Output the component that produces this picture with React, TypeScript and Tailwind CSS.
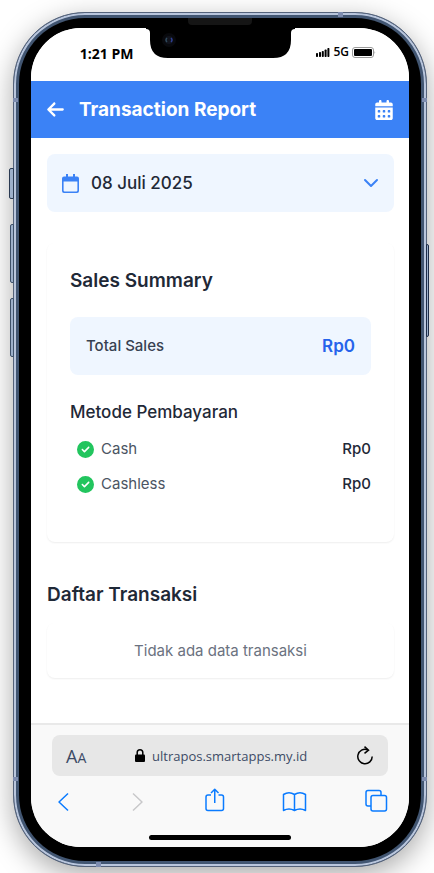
import type { ReactNode } from "react";
import { ChevronDown } from "lucide-react";
import { FaArrowLeft, FaCalendarDays, FaCircleCheck } from "react-icons/fa6";

const payments = [
  { name: "Cash", amount: "Rp0" },
  { name: "Cashless", amount: "Rp0" },
];

function Notch() {
  return (
    <svg className="h-[31px] w-[149px]" viewBox="0 0 149 31" aria-hidden="true">
      <path d="M0 0H149V1Q145 1 145 5V12Q145 30 127 30H22Q4 30 4 12V5Q4 1 0 1Z" fill="#000" />
      <circle cx="23" cy="12" r="7" fill="#08090d" />
      <circle cx="23" cy="12" r="4" fill="#12141d" />
      <path d="M21 10Q19 12 21 14" stroke="#2f4a5c" fill="none" strokeWidth="1.5" />
      <path d="M25 10Q27 12 25 14" stroke="#2e3f94" fill="none" strokeWidth="1.5" />
    </svg>
  );
}

function StatusBar() {
  return (
    <div className="grid h-[53px] grid-cols-[1fr_auto_1fr] bg-white font-['Open_Sans',sans-serif] text-black">
      <span className="justify-self-end pt-4 pr-3 text-sm leading-5 font-bold">1:21 PM</span>
      <Notch />
      <div className="mt-[14px] flex h-5 items-center gap-[3px] self-start justify-self-end pr-[33px]">
        <svg className="h-[9px] w-[14px]" viewBox="0 0 14 9" aria-label="Signal">
          <rect x="0" y="5" width="2" height="4" rx=".7" />
          <rect x="3" y="4" width="2" height="5" rx=".7" />
          <rect x="5.8" y="3" width="2" height="6" rx=".7" />
          <rect x="8.6" y="1.5" width="2" height="7.5" rx=".7" />
          <rect x="11.4" y="0" width="2" height="9" rx=".7" />
        </svg>
        <span className="text-xs leading-5 font-semibold">5G</span>
        <svg className="h-[11px] w-6" viewBox="0 0 24 11" aria-label="Battery">
          <rect x=".5" y=".5" width="21" height="10" rx="2.5" fill="none" stroke="#9a9a9a" />
          <rect x="2" y="2" width="18" height="7" rx="1" />
          <path d="M22.6 4Q23.8 5.5 22.6 7Z" fill="#777" />
        </svg>
      </div>
    </div>
  );
}

function Header() {
  return (
    <header className="flex h-[57px] items-center bg-[#3b82f6] px-[15px] text-white">
      <button type="button" aria-label="Back" className="mr-[14px]">
        <FaArrowLeft size={19} />
      </button>
      <h1 className="text-[19px] leading-7 font-bold">Transaction Report</h1>
      <button type="button" aria-label="Calendar" className="ml-auto">
        <FaCalendarDays size={20} />
      </button>
    </header>
  );
}

function CalendarIcon() {
  return (
    <svg className="mr-3 h-[19px] w-[17px] text-[#3b82f6]" viewBox="0 0 17 19" aria-hidden="true">
      <path d="M4 0H6V2.5H11V0H13V2.5H15Q17 2.5 17 4.5V17Q17 19 15 19H2Q0 19 0 17V4.5Q0 2.5 2 2.5H4ZM1.6 7.5V16.6Q1.6 17.4 2.4 17.4H14.6Q15.4 17.4 15.4 16.6V7.5Z" fill="currentColor" fillRule="evenodd" />
    </svg>
  );
}

function SalesSummary() {
  return (
    <section className="mt-[31px] rounded-lg bg-white p-[23px] shadow-[0_1px_2px_rgba(0,0,0,0.07)]">
      <h2 className="text-[19px] leading-[30px] font-semibold text-[#1f2937]">Sales Summary</h2>
      <div className="mt-[21px] flex h-[58px] items-center justify-between rounded-lg bg-[#eff6ff] px-4">
        <span className="text-[15px] leading-[26px] font-medium text-[#374151]">Total Sales</span>
        <span className="text-[17px] leading-[26px] font-semibold text-[#2563eb]">Rp0</span>
      </div>
      <h3 className="mt-[23px] text-[17px] leading-7 font-medium text-[#1f2937]">Metode Pembayaran</h3>
      <ul className="mt-[10px] mb-[22px] flex flex-col gap-[9px]">
        {payments.map((p) => (
          <li key={p.name} className="flex items-center pl-[7px] text-[15px] leading-[26px]">
            <FaCircleCheck size={17} className="mr-[7px] text-[#22c55e]" />
            <span className="text-[#4b5563]">{p.name}</span>
            <span className="ml-auto font-medium text-[#1f2937]">{p.amount}</span>
          </li>
        ))}
      </ul>
    </section>
  );
}

function ToolButton({ label, size, muted, children }: { label: string; size: string; muted?: boolean; children: ReactNode }) {
  return (
    <button type="button" aria-label={label} className={`flex justify-center ${size} ${muted ? "text-[#c8c8ca]" : "text-[#0a7bff]"}`}>
      <svg className="size-6 shrink-0 overflow-visible" viewBox="0 0 24 24" fill="none" stroke="currentColor" strokeWidth="1.5" strokeLinejoin="round">
        {children}
      </svg>
    </button>
  );
}

function BrowserBar() {
  return (
    <footer className="border-t-2 border-[#e9e9e9] bg-[#f9f9f9] px-[21px] pt-[10px] pb-[7px]">
      <div className="flex h-[41px] items-center rounded-lg bg-[#e7e7e7] px-[14px] font-['Open_Sans',sans-serif] text-[#3d4b66]">
        <button type="button" aria-label="Text size" className="text-lg leading-6">
          A<span className="text-sm">A</span>
        </button>
        <div className="flex flex-1 items-center justify-center gap-[7px]">
          <svg className="h-[13px] w-[10px]" viewBox="0 0 10 13" aria-hidden="true">
            <rect x="0" y="5.5" width="10" height="7.5" rx="1" fill="#000" />
            <path d="M2.2 6V3.6Q2.2.8 5 .8T7.8 3.6V6" fill="none" stroke="#000" strokeWidth="1.5" />
          </svg>
          <span className="text-[13px] leading-6">ultrapos.smartapps.my.id</span>
        </div>
        <button type="button" aria-label="Reload">
          <svg className="h-5 w-[18px]" viewBox="0 0 18 20" fill="none" stroke="#000" strokeWidth="1.5">
            <path d="M11.5 3.8A7.2 7.2 0 1 0 16.2 10.5" />
            <path d="M8.5 .6L12.5 4.2L8.5 7.4" />
          </svg>
        </button>
      </div>
      <nav className="mt-[13px] mb-[22px] flex h-6 items-center justify-between pl-[3px]">
        <ToolButton label="Back" size="w-4">
          <path d="M17 4.5L8 13L17 21.5" />
        </ToolButton>
        <ToolButton label="Forward" size="w-4" muted>
          <path d="M8 4.5L17 13L8 21.5" />
        </ToolButton>
        <ToolButton label="Share" size="w-5">
          <path d="M9 6H6Q4 6 4 8V19.5Q4 21.5 6 21.5H19.5Q21.5 21.5 21.5 19.5V8Q21.5 6 19.5 6H16.5M12.75 14V.5M9 4L12.75 .3L16.5 4" />
        </ToolButton>
        <ToolButton label="Bookmarks" size="w-6">
          <path d="M12.5 5.5V21.500M12.5 5.5Q7 2 1.5 5.5V21.5Q7 18.500 12.5 21.5Q18 18.500 23.5 21.5V5.5Q18 2 12.5 5.5" />
        </ToolButton>
        <ToolButton label="Tabs" size="w-6">
          <path d="M7 17H4Q2 17 2 15V3.5Q2 1.500 4 1.5H15Q17 1.500 17 3.5V6" />
          <rect x="7" y="6.5" width="15.5" height="15.5" rx="2" />
        </ToolButton>
      </nav>
      <div className="mx-auto h-[5px] w-[142px] rounded-full bg-black" />
    </footer>
  );
}

export default function App() {
  return (
    <div className="overflow-hidden bg-white pt-3 pr-[7px] pb-[7px] pl-[13px] font-['Inter',sans-serif]">
      <div className="relative">
        <i className="absolute top-[156px] -left-[4px] h-[31px] w-[5px] rounded-l-xs border border-[#2a3a52] bg-[#9db0cb]" />
        <i className="absolute top-[212px] -left-[3px] h-[59px] w-[4px] rounded-l-xs border border-[#3d5069] bg-[#9db0cb]" />
        <i className="absolute top-[286px] -left-[3px] h-[59px] w-[4px] rounded-l-xs border border-[#3d5069] bg-[#9db0cb]" />
        <i className="absolute top-[232px] -right-[2px] h-[93px] w-[3px] rounded-r-xs border border-[#1d2c48] bg-[#9db0cb]" />
        <div className="rounded-[72px] border border-[#54627a] bg-[#425672] p-[5px] shadow-[0_8px_28px_rgba(0,0,0,0.34),inset_0_0_0_2px_#b9c6dd]">
          <div className="relative rounded-[66px] bg-black px-3 pt-[10px] pb-[14px]">
            <i className="absolute top-0 left-1/2 h-[7px] w-[64px] -translate-x-1/2 rounded-b bg-[#151515]" />
            <div className="overflow-hidden rounded-[50px] bg-white">
              <StatusBar />
              <Header />
              <main className="pt-4 pr-[15px] pb-[45px] pl-4">
                <button type="button" className="flex h-[58px] w-full items-center rounded-lg bg-[#eff6ff] px-[15px]">
                  <CalendarIcon />
                  <span className="text-[17px] leading-7 font-medium text-[#1f2937]">08 Juli 2025</span>
                  <ChevronDown size={24} className="-mr-1 ml-auto text-[#3b82f6]" />
                </button>
                <SalesSummary />
                <h2 className="mt-[38px] text-[19px] leading-[30px] font-semibold text-[#1f2937]">Daftar Transaksi</h2>
                <p className="mt-[13px] rounded-lg bg-white py-4 text-center text-[15px] leading-[23px] text-[#6b7280] shadow-[0_1px_2px_rgba(0,0,0,0.07)]">
                  Tidak ada data transaksi
                </p>
              </main>
              <BrowserBar />
            </div>
          </div>
        </div>
        <i className="absolute top-[86px] left-0 h-1 w-[5px] bg-[#7e8db0]" />
        <i className="absolute top-[86px] right-0 h-1 w-[5px] bg-[#7e8db0]" />
        <i className="absolute bottom-[86px] left-0 h-1 w-[5px] bg-[#7e8db0]" />
        <i className="absolute right-0 bottom-[86px] h-1 w-[5px] bg-[#7e8db0]" />
        <i className="absolute top-0 right-[84px] h-[5px] w-[5px] bg-[#7e8db0]" />
        <i className="absolute bottom-0 left-[83px] h-[5px] w-[5px] bg-[#7e8db0]" />
      </div>
    </div>
  );
}
